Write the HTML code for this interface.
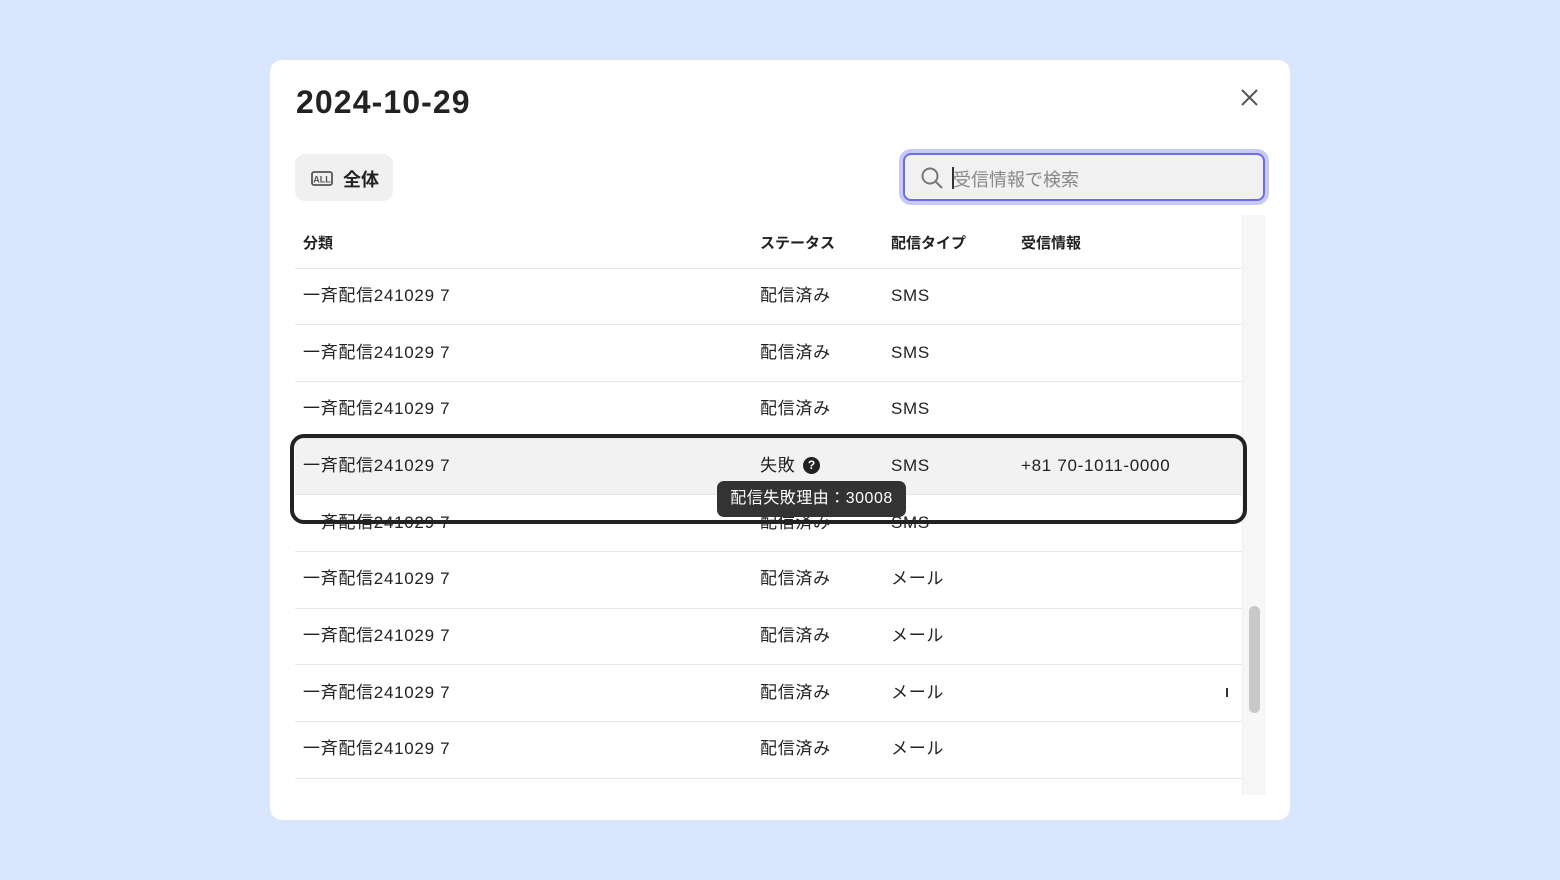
<!DOCTYPE html>
<html><head><meta charset="utf-8"><style>
body{margin:0;width:1560px;height:880px;background:#d8e5fd;font-family:"Liberation Sans","Noto Sans CJK JP",sans-serif;color:#222;position:relative;overflow:hidden}
.modal{position:absolute;left:270px;top:60px;width:1020px;height:760px;background:#fff;border-radius:12px}
.a{position:absolute}
.title{left:296px;top:84px;font-size:32px;font-weight:bold;letter-spacing:1.1px}
.btn{left:295px;top:154px;width:98px;height:47px;background:#f0f0f0;border-radius:10px}
.search{left:903px;top:153px;width:358px;height:44px;background:#f1f1f1;border:2px solid #6d6de8;border-radius:8px;box-shadow:0 0 0 4px #c9c9f9}
.hd{top:232px;font-size:15px;font-weight:bold}
.line{left:295px;width:947px;height:1px;background:#e6e6e6}
.cell{font-size:17px;line-height:20px;letter-spacing:0.7px;margin-top:1px}
</style></head><body>
<div class="modal"></div>
<div class="a title">2024-10-29</div>
<svg class="a" style="left:1240px;top:88px" width="19" height="19" viewBox="0 0 19 19"><path d="M2 2L17 17M17 2L2 17" stroke="#555" stroke-width="2"/></svg>
<div class="a btn"></div>
<svg class="a" style="left:311px;top:171px" width="22" height="15" viewBox="0 0 22 15"><rect x="1" y="1" width="20" height="13" rx="2" fill="none" stroke="#555" stroke-width="1.8"/><text x="11" y="11.5" font-size="9" font-weight="bold" text-anchor="middle" fill="#555" font-family="Liberation Sans">ALL</text></svg>
<div class="a" style="left:343px;top:166px;font-size:18px;font-weight:bold">全体</div>
<div class="a search"></div>
<svg class="a" style="left:920px;top:166px" width="24" height="24" viewBox="0 0 24 24"><circle cx="10" cy="10" r="7.5" fill="none" stroke="#777" stroke-width="2"/><path d="M15.5 15.5L22 22" stroke="#777" stroke-width="2"/></svg>
<div class="a" style="left:952px;top:167px;width:1.5px;height:22px;background:#333"></div>
<div class="a" style="left:953px;top:166px;font-size:18px;color:#888">受信情報で検索</div>
<div class="a" style="left:1242px;top:215px;width:23px;height:580px;background:#f7f7f7;border-left:1px solid #eee"></div>
<div class="a" style="left:1249px;top:606px;width:11px;height:107px;background:#c8c8c8;border-radius:6px"></div>
<div class="a hd" style="left:303px">分類</div>
<div class="a hd" style="left:760px">ステータス</div>
<div class="a hd" style="left:891px">配信タイプ</div>
<div class="a hd" style="left:1021px">受信情報</div>
<div class="a" style="left:295px;top:438px;width:947px;height:56px;background:#f2f2f2"></div>
<div class="a line" style="top:268px"></div><div class="a line" style="top:324px"></div><div class="a line" style="top:381px"></div><div class="a line" style="top:438px"></div><div class="a line" style="top:494px"></div><div class="a line" style="top:551px"></div><div class="a line" style="top:608px"></div><div class="a line" style="top:664px"></div><div class="a line" style="top:721px"></div><div class="a line" style="top:778px"></div>
<div class="a cell" style="left:303px;top:285px">一斉配信241029 7</div><div class="a cell" style="left:760px;top:285px">配信済み</div><div class="a cell" style="left:891px;top:285px">SMS</div>
<div class="a cell" style="left:303px;top:342px">一斉配信241029 7</div><div class="a cell" style="left:760px;top:342px">配信済み</div><div class="a cell" style="left:891px;top:342px">SMS</div>
<div class="a cell" style="left:303px;top:398px">一斉配信241029 7</div><div class="a cell" style="left:760px;top:398px">配信済み</div><div class="a cell" style="left:891px;top:398px">SMS</div>
<div class="a cell" style="left:303px;top:455px">一斉配信241029 7</div><div class="a cell" style="left:760px;top:455px">失敗</div><div class="a cell" style="left:891px;top:455px">SMS</div><div class="a cell" style="left:1021px;top:455px">+81 70-1011-0000</div>
<div class="a" style="left:803px;top:457px;width:17px;height:17px;border-radius:50%;background:#222;color:#fff;font-size:12px;font-weight:bold;text-align:center;line-height:17px">?</div>
<div class="a cell" style="left:303px;top:512px">一斉配信241029 7</div><div class="a cell" style="left:760px;top:512px">配信済み</div><div class="a cell" style="left:891px;top:512px">SMS</div>
<div class="a cell" style="left:303px;top:568px">一斉配信241029 7</div><div class="a cell" style="left:760px;top:568px">配信済み</div><div class="a cell" style="left:891px;top:568px">メール</div>
<div class="a cell" style="left:303px;top:625px">一斉配信241029 7</div><div class="a cell" style="left:760px;top:625px">配信済み</div><div class="a cell" style="left:891px;top:625px">メール</div>
<div class="a cell" style="left:303px;top:682px">一斉配信241029 7</div><div class="a cell" style="left:760px;top:682px">配信済み</div><div class="a cell" style="left:891px;top:682px">メール</div>
<div class="a cell" style="left:303px;top:738px">一斉配信241029 7</div><div class="a cell" style="left:760px;top:738px">配信済み</div><div class="a cell" style="left:891px;top:738px">メール</div>
<div class="a" style="left:1226px;top:688px;width:2px;height:9px;background:#333"></div>
<div class="a" style="left:290px;top:434px;width:949px;height:82px;border:4px solid #222;border-radius:14px"></div>
<div class="a" style="left:717px;top:481px;width:189px;height:36px;background:#333;border-radius:7px;color:#fff;font-size:16px;line-height:36px;text-align:center;letter-spacing:0.5px">配信失敗理由：30008</div>
</body></html>
